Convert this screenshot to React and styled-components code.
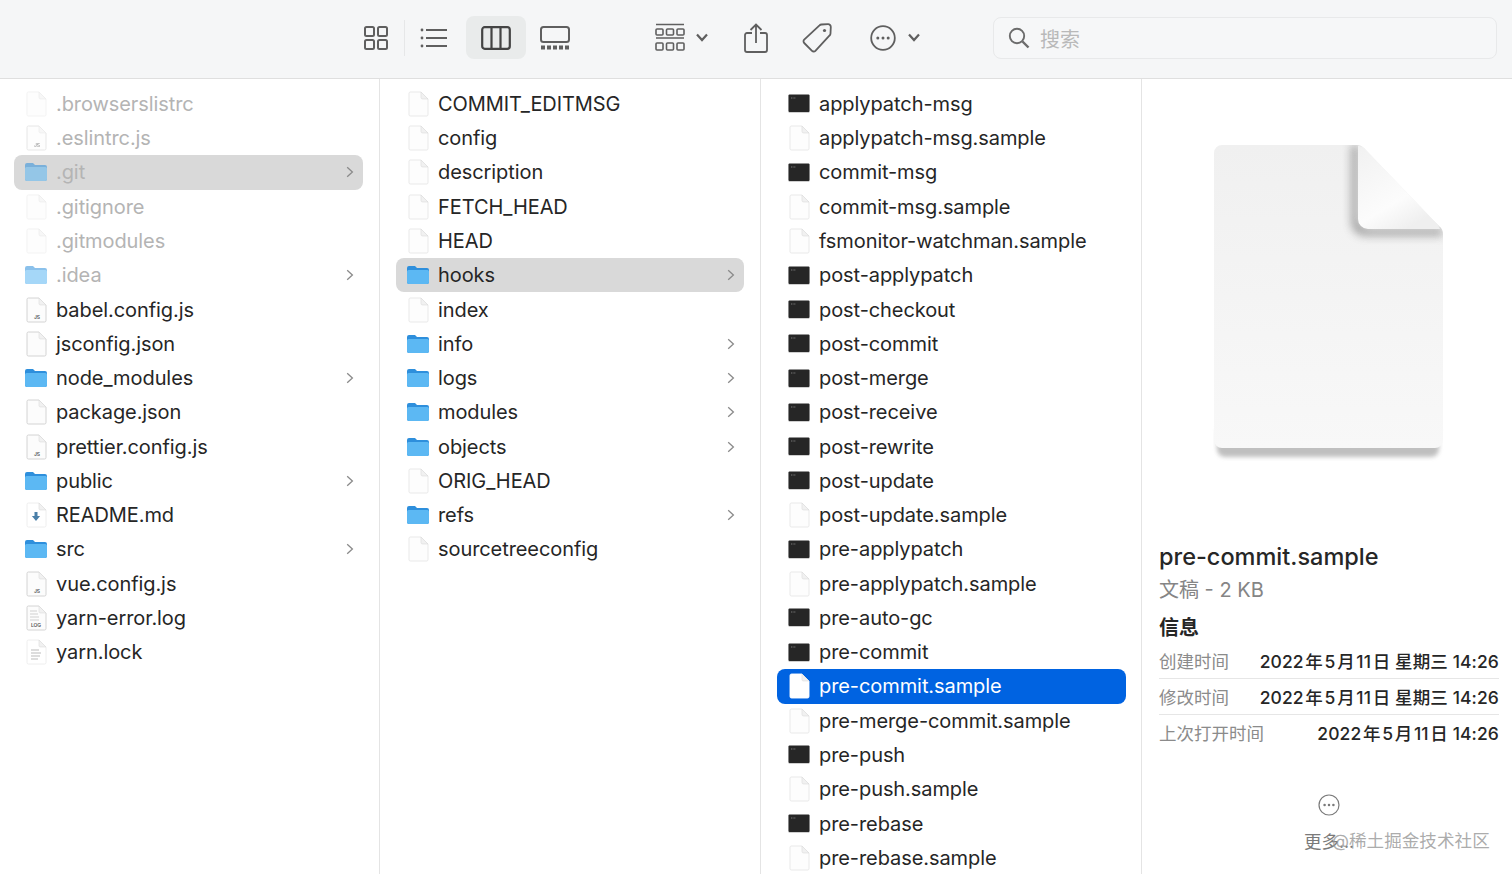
import React from "react";
import styled, { createGlobalStyle } from "styled-components";

const FONT = `Inter, "Noto Sans CJK SC", sans-serif`;

const GlobalStyle = createGlobalStyle`
  html, body {
    margin: 0;
    height: 100%;
    overflow: hidden;
    background: #fff;
    font-family: ${FONT};
  }
`;

const Window = styled.div`
  width: 1512px;
  height: 874px;
  display: flex;
  flex-direction: column;
  overflow: hidden;
  background: #fff;
`;

const Toolbar = styled.div`
  flex: none;
  height: 78px;
  box-sizing: content-box;
  display: flex;
  align-items: center;
  padding-left: 363px;
  background: #f5f6f7;
  border-bottom: 1px solid #dfdfdf;
  color: #5f5f5f;
`;

const ToolSlot = styled.div`
  flex: none;
  display: flex;
  align-items: center;
  gap: ${(p) => p.$gap || 0}px;
  margin-left: ${(p) => p.$left || 0}px;
  margin-bottom: 3px;
`;

const ToolActive = styled(ToolSlot)`
  width: 60px;
  height: 43px;
  justify-content: center;
  border-radius: 8px;
  background: #e9ebeb;
  color: #444;
`;

const ToolDivider = styled.div`
  flex: none;
  width: 1px;
  height: 36px;
  margin-left: 15px;
  margin-bottom: 3px;
  background: #e6e7e8;
`;

const SearchBox = styled.div`
  flex: none;
  width: 504px;
  height: 42px;
  box-sizing: border-box;
  margin-left: 73px;
  margin-bottom: 2px;
  padding-left: 14px;
  display: flex;
  align-items: center;
  gap: 10px;
  border: 1px solid #e8e9ea;
  border-radius: 8px;
  background: #f6f7f8;
  color: #6c6c6c;
`;

const SearchHint = styled.span`
  font-size: 20px;
  color: #b9b9b9;
`;

const Browser = styled.div`
  flex: 1;
  min-height: 0;
  display: flex;
`;

const Column = styled.div`
  flex: none;
  width: ${(p) => p.$width}px;
  box-sizing: border-box;
  padding: 7.8px ${(p) => p.$right || 16}px 0 ${(p) => p.$left}px;
  border-right: 1px solid #e4e4e4;
  overflow: hidden;
`;

const Row = styled.div`
  height: 34.27px;
  display: flex;
  align-items: center;
  padding-left: 10px;
  padding-right: 9px;
  border-radius: 8px;
  font-size: 20px;
  letter-spacing: -0.08px;
  color: ${(p) => (p.$selected ? "#fff" : p.$dim ? "#b4b4b4" : "#262626")};
  background: ${(p) =>
    p.$selected ? "#0063e1" : p.$open ? "#d9d9d9" : "transparent"};
`;

const IconSlot = styled.span`
  flex: none;
  width: 24px;
  height: 26px;
  margin-right: 8px;
  display: flex;
  align-items: center;
  justify-content: center;
  opacity: ${(p) => (p.$dim ? 0.55 : 1)};
`;

const RowName = styled.span`
  flex: 1;
  white-space: nowrap;
`;

const Preview = styled.div`
  flex: 1;
  min-width: 0;
  box-sizing: border-box;
  padding: 0 13px 0 17px;
  position: relative;
  display: flex;
  flex-direction: column;
`;

const Thumb = styled.div`
  height: 462px;
  display: flex;
  justify-content: center;
  padding-top: 60px;
  box-sizing: border-box;
`;

const FileTitle = styled.div`
  font-size: 23.5px;
  font-weight: 500;
  line-height: 32px;
  color: #262626;
`;

const FileKind = styled.div`
  font-size: 20px;
  line-height: 30px;
  margin-top: 2px;
  color: #858585;
`;

const InfoHeading = styled.div`
  font-size: 20px;
  font-weight: 700;
  line-height: 30px;
  margin-top: 8px;
  color: #262626;
`;

const InfoRow = styled.div`
  height: 35px;
  display: flex;
  align-items: center;
  justify-content: space-between;
  font-size: 17.5px;
  border-bottom: ${(p) => (p.$last ? "none" : "1px solid #e6e6e6")};
`;

const InfoLabel = styled.span`
  color: #8b8b8b;
`;

const InfoValue = styled.span`
  color: #262626;
  font-weight: 500;
  letter-spacing: 0.1px;
  white-space: nowrap;
`;

const MoreBlock = styled.div`
  margin-top: 44px;
  display: flex;
  flex-direction: column;
  align-items: center;
  gap: 12px;
  color: #7a7a7a;
  font-size: 17.5px;
`;

const Watermark = styled.div`
  position: absolute;
  left: 190px;
  top: 748px;
  font-size: 17.6px;
  color: rgba(150, 150, 150, 0.8);
  white-space: nowrap;
`;

const Chevron = () => (
  <svg width="8" height="12" viewBox="0 0 8 12" fill="none">
    <path d="M1.2 1.2 L6.4 6 L1.2 10.8" stroke="#8a8a8a" strokeWidth="1.3" />
  </svg>
);

const Folder = () => (
  <svg width="24" height="20" viewBox="0 0 24 20">
    <path
      d="M1 17V3a2 2 0 0 1 2-2h6l2 2h10a2 2 0 0 1 2 2v12a2 2 0 0 1-2 2H3a2 2 0 0 1-2-2z"
      fill="#2e8fdc"
    />
    <path
      d="M1 17V6.5a1.5 1.5 0 0 1 1.5-1.5h19A1.5 1.5 0 0 1 23 6.5V17a2 2 0 0 1-2 2H3a2 2 0 0 1-2-2z"
      fill="#5cb8f3"
    />
  </svg>
);

const Terminal = () => (
  <svg width="22" height="19" viewBox="0 0 22 19">
    <rect x="0.5" y="1" width="21" height="18" rx="1" fill="#cfcfcf" />
    <rect x="0.5" y="0.5" width="21" height="17.5" rx="1" fill="#262626" />
    <path d="M3 4h5" stroke="#777" strokeWidth="1" strokeDasharray="1 .6" />
  </svg>
);

const DocLabel = styled.text`
  font-family: ${FONT};
  font-size: ${(p) => p.$size}px;
  font-weight: 600;
  fill: #555;
`;

// small document with an optional mark on it
const Doc = ({ mark, fill = "#fcfcfc", edge = "#cfcfcf" }) => (
  <svg width="22" height="26" viewBox="0 0 22 26">
    <path
      d="M2 2.5a1.5 1.5 0 0 1 1.5-1.5H14l7 7v15.5a1.5 1.5 0 0 1-1.5 1.5h-16A1.5 1.5 0 0 1 2 23.5z"
      fill={fill}
      stroke={edge}
      strokeWidth="0.9"
    />
    <path d="M14 1v5.5A1.5 1.5 0 0 0 15.5 8H21z" fill="#f1f1f1" stroke="#dcdcdc" strokeWidth="0.6" />
    {mark === "js" && (
      <DocLabel x="9" y="22" $size={5}>
        JS
      </DocLabel>
    )}
    {mark === "log" && (
      <>
        <path d="M5 6h7M5 9h8M5 12h9M5 15h9" stroke="#cfcfcf" strokeWidth="1.2" />
        <DocLabel x="6" y="22" $size={5}>
          LOG
        </DocLabel>
      </>
    )}
    {mark === "text" && <path d="M6 11h8M6 14h10M6 17h9M6 20h7" stroke="#bbb" strokeWidth="1" />}
    {mark === "down" && <path d="M9.5 10h3v4h2.6L11 19l-4.1-5h2.6z" fill="#4a7fa8" />}
  </svg>
);

const FileIcon = ({ type, selected }) => {
  if (type === "folder") return <Folder />;
  if (type === "term") return <Terminal />;
  if (selected) return <Doc fill="#fff" edge="#fff" />;
  if (type === "plain") return <Doc edge="#e6e6e6" fill="#fdfdfd" />;
  if (type === "readme") return <Doc mark="down" fill="#fff" edge="#ececec" />;
  if (type === "lock") return <Doc mark="text" fill="#fff" edge="#ececec" />;
  return <Doc mark={type} />;
};

const FileRow = ({ name, type = "plain", dim, open, selected, nested }) => (
  <Row $dim={dim} $open={open} $selected={selected}>
    <IconSlot $dim={dim}>
      <FileIcon type={type} selected={selected} />
    </IconSlot>
    <RowName>{name}</RowName>
    {nested && <Chevron />}
  </Row>
);

const rootFiles = [
  { name: ".browserslistrc", dim: true },
  { name: ".eslintrc.js", type: "js", dim: true },
  { name: ".git", type: "folder", dim: true, open: true, nested: true },
  { name: ".gitignore", dim: true },
  { name: ".gitmodules", dim: true },
  { name: ".idea", type: "folder", dim: true, nested: true },
  { name: "babel.config.js", type: "js" },
  { name: "jsconfig.json", type: "outlined" },
  { name: "node_modules", type: "folder", nested: true },
  { name: "package.json", type: "outlined" },
  { name: "prettier.config.js", type: "js" },
  { name: "public", type: "folder", nested: true },
  { name: "README.md", type: "readme" },
  { name: "src", type: "folder", nested: true },
  { name: "vue.config.js", type: "js" },
  { name: "yarn-error.log", type: "log" },
  { name: "yarn.lock", type: "lock" },
];

const gitFiles = [
  { name: "COMMIT_EDITMSG" },
  { name: "config" },
  { name: "description" },
  { name: "FETCH_HEAD" },
  { name: "HEAD" },
  { name: "hooks", type: "folder", open: true, nested: true },
  { name: "index" },
  { name: "info", type: "folder", nested: true },
  { name: "logs", type: "folder", nested: true },
  { name: "modules", type: "folder", nested: true },
  { name: "objects", type: "folder", nested: true },
  { name: "ORIG_HEAD" },
  { name: "refs", type: "folder", nested: true },
  { name: "sourcetreeconfig" },
];

const hookFiles = [
  { name: "applypatch-msg", type: "term" },
  { name: "applypatch-msg.sample" },
  { name: "commit-msg", type: "term" },
  { name: "commit-msg.sample" },
  { name: "fsmonitor-watchman.sample" },
  { name: "post-applypatch", type: "term" },
  { name: "post-checkout", type: "term" },
  { name: "post-commit", type: "term" },
  { name: "post-merge", type: "term" },
  { name: "post-receive", type: "term" },
  { name: "post-rewrite", type: "term" },
  { name: "post-update", type: "term" },
  { name: "post-update.sample" },
  { name: "pre-applypatch", type: "term" },
  { name: "pre-applypatch.sample" },
  { name: "pre-auto-gc", type: "term" },
  { name: "pre-commit", type: "term" },
  { name: "pre-commit.sample", selected: true },
  { name: "pre-merge-commit.sample" },
  { name: "pre-push", type: "term" },
  { name: "pre-push.sample" },
  { name: "pre-rebase", type: "term" },
  { name: "pre-rebase.sample" },
];

const stroke = { fill: "none", stroke: "currentColor", strokeWidth: 2 };

const IconGrid = () => (
  <svg width="26" height="26" viewBox="0 0 26 26" {...stroke}>
    <rect x="2" y="2" width="9" height="9" rx="1.5" />
    <rect x="15" y="2" width="9" height="9" rx="1.5" />
    <rect x="2" y="15" width="9" height="9" rx="1.5" />
    <rect x="15" y="15" width="9" height="9" rx="1.5" />
  </svg>
);

const IconList = () => (
  <svg width="28" height="22" viewBox="0 0 28 22" {...stroke}>
    <path d="M6 3h21M6 11h21M6 19h21" />
    <circle cx="2" cy="3" r="1.4" fill="currentColor" stroke="none" />
    <circle cx="2" cy="11" r="1.4" fill="currentColor" stroke="none" />
    <circle cx="2" cy="19" r="1.4" fill="currentColor" stroke="none" />
  </svg>
);

const IconColumns = () => (
  <svg width="30" height="24" viewBox="0 0 30 24" {...stroke} strokeWidth="2.2">
    <rect x="1.2" y="1.2" width="27.6" height="21.6" rx="2.5" />
    <path d="M10.5 1v22M19.5 1v22" />
  </svg>
);

const IconGallery = () => (
  <svg width="30" height="24" viewBox="0 0 30 24" {...stroke}>
    <rect x="1" y="1" width="28" height="15" rx="2.5" />
    <path d="M1 21.5h28" strokeWidth="4" strokeDasharray="4 2" />
  </svg>
);

const IconGroup = () => (
  <svg width="30" height="30" viewBox="0 0 30 30" fill="none" stroke="currentColor" strokeWidth="1.6">
    <path d="M1 1.5h28M1 15h28" />
    <rect x="1" y="6" width="7" height="6" rx="1" />
    <rect x="11.5" y="6" width="7" height="6" rx="1" />
    <rect x="22" y="6" width="7" height="6" rx="1" />
    <rect x="1" y="20" width="7" height="7" rx="1" />
    <rect x="11.5" y="20" width="7" height="7" rx="1" />
    <rect x="22" y="20" width="7" height="7" rx="1" />
  </svg>
);

const IconDown = () => (
  <svg width="12" height="9" viewBox="0 0 12 9" fill="none" stroke="currentColor" strokeWidth="2.2">
    <path d="M1 1.5 6 7l5-5.5" />
  </svg>
);

const IconShare = () => (
  <svg width="24" height="30" viewBox="0 0 24 30" {...stroke} strokeWidth="1.8">
    <path d="M8 10H3a2 2 0 0 0-2 2v15a2 2 0 0 0 2 2h18a2 2 0 0 0 2-2V12a2 2 0 0 0-2-2h-5" />
    <path d="M12 20V1.5M6.5 7 12 1.5 17.5 7" />
  </svg>
);

const IconTag = () => (
  <svg width="30" height="30" viewBox="0 0 30 30" {...stroke} strokeWidth="1.8">
    <path d="M17.5 2.4a3 3 0 0 1 2-.9l6.5-.3a2.7 2.7 0 0 1 2.8 2.8l-.3 6.5a3 3 0 0 1-.9 2L13.4 27.8a2.4 2.4 0 0 1-3.4 0L2.2 20a2.4 2.4 0 0 1 0-3.4z" />
    <circle cx="22.5" cy="7.5" r="1.6" fill="currentColor" stroke="none" />
  </svg>
);

const IconMore = ({ size = 26, width = 1.8 }) => (
  <svg width={size} height={size} viewBox="0 0 26 26" fill="none" stroke="currentColor" strokeWidth={width}>
    <circle cx="13" cy="13" r="11.8" />
    <circle cx="7.8" cy="13" r="1.5" fill="currentColor" stroke="none" />
    <circle cx="13" cy="13" r="1.5" fill="currentColor" stroke="none" />
    <circle cx="18.2" cy="13" r="1.5" fill="currentColor" stroke="none" />
  </svg>
);

const IconSearch = () => (
  <svg width="22" height="22" viewBox="0 0 22 22" fill="none" stroke="currentColor" strokeWidth="1.9">
    <circle cx="9" cy="9" r="7.2" />
    <path d="m14.5 14.5 6 6" strokeWidth="2.4" />
  </svg>
);

const PAGE =
  "M15 14a8 8 0 0 1 8-8h135a10 10 0 0 1 7 3L240 87a10 10 0 0 1 4 8V301a8 8 0 0 1-8 8H23a8 8 0 0 1-8-8z";

// large page icon of the preview pane
const BigDoc = () => (
  <svg width="260" height="330" viewBox="0 0 260 330">
    <defs>
      <linearGradient id="sheet" x1="0" y1="0" x2="0" y2="1">
        <stop offset="0" stopColor="#f0f0f0" />
        <stop offset="1" stopColor="#f8f8f8" />
      </linearGradient>
      <linearGradient id="fold" x1="0" y1="0" x2="0.6" y2="1">
        <stop offset="0" stopColor="#f1f1f1" />
        <stop offset="0.7" stopColor="#fcfcfc" />
        <stop offset="1" stopColor="#efefef" />
      </linearGradient>
      <filter id="soft" x="-30%" y="-30%" width="160%" height="160%">
        <feGaussianBlur stdDeviation="5" />
      </filter>
      <filter id="under" x="-10%" y="-30%" width="120%" height="160%">
        <feGaussianBlur stdDeviation="2" />
      </filter>
      <clipPath id="page">
        <path d={PAGE} />
      </clipPath>
    </defs>
    <path d="M18 290h222v20a8 8 0 0 1-8 8H26a8 8 0 0 1-8-8z" fill="#8c8c8c" opacity="0.55" filter="url(#under)" />
    <path d={PAGE} fill="url(#sheet)" />
    <g clipPath="url(#page)">
      <path
        d="M159 6v74a10 10 0 0 0 10 10h75v6H166a13 13 0 0 1-13-13V6z"
        fill="#6f6f6f"
        opacity="0.75"
        filter="url(#soft)"
      />
    </g>
    <path d="M159 7h1a7 7 0 0 1 5 2L238 85q2 2 3 5H169a10 10 0 0 1-10-10z" fill="url(#fold)" />
  </svg>
);

const HAIR = "\u200A";
const fullDate = `2022${HAIR}年${HAIR}5${HAIR}月${HAIR}11${HAIR}日 星期三 14:26`;
const shortDate = `2022${HAIR}年${HAIR}5${HAIR}月${HAIR}11${HAIR}日 14:26`;

const App = () => (
  <Window>
    <GlobalStyle />
    <Toolbar>
      <ToolSlot>
        <IconGrid />
      </ToolSlot>
      <ToolDivider />
      <ToolSlot $left={15}>
        <IconList />
      </ToolSlot>
      <ToolActive $left={18}>
        <IconColumns />
      </ToolActive>
      <ToolSlot $left={14}>
        <IconGallery />
      </ToolSlot>
      <ToolSlot $left={85} $gap={11}>
        <IconGroup />
        <IconDown />
      </ToolSlot>
      <ToolSlot $left={36}>
        <IconShare />
      </ToolSlot>
      <ToolSlot $left={34}>
        <IconTag />
      </ToolSlot>
      <ToolSlot $left={38} $gap={12}>
        <IconMore />
        <IconDown />
      </ToolSlot>
      <SearchBox>
        <IconSearch />
        <SearchHint>搜索</SearchHint>
      </SearchBox>
    </Toolbar>
    <Browser>
      <Column $width={380} $left={14}>
        {rootFiles.map((f) => (
          <FileRow key={f.name} {...f} />
        ))}
      </Column>
      <Column $width={381} $left={16}>
        {gitFiles.map((f) => (
          <FileRow key={f.name} {...f} />
        ))}
      </Column>
      <Column $width={381} $left={16} $right={15}>
        {hookFiles.map((f) => (
          <FileRow key={f.name} {...f} />
        ))}
      </Column>
      <Preview>
        <Thumb>
          <BigDoc />
        </Thumb>
        <FileTitle>pre-commit.sample</FileTitle>
        <FileKind>文稿 - 2 KB</FileKind>
        <InfoHeading>信息</InfoHeading>
        <InfoRow>
          <InfoLabel>创建时间</InfoLabel>
          <InfoValue>{fullDate}</InfoValue>
        </InfoRow>
        <InfoRow>
          <InfoLabel>修改时间</InfoLabel>
          <InfoValue>{fullDate}</InfoValue>
        </InfoRow>
        <InfoRow $last>
          <InfoLabel>上次打开时间</InfoLabel>
          <InfoValue>{shortDate}</InfoValue>
        </InfoRow>
        <MoreBlock>
          <IconMore size={22} width={1.4} />
          <span>更多...</span>
        </MoreBlock>
        <Watermark>@稀土掘金技术社区</Watermark>
      </Preview>
    </Browser>
  </Window>
);

export default App;
